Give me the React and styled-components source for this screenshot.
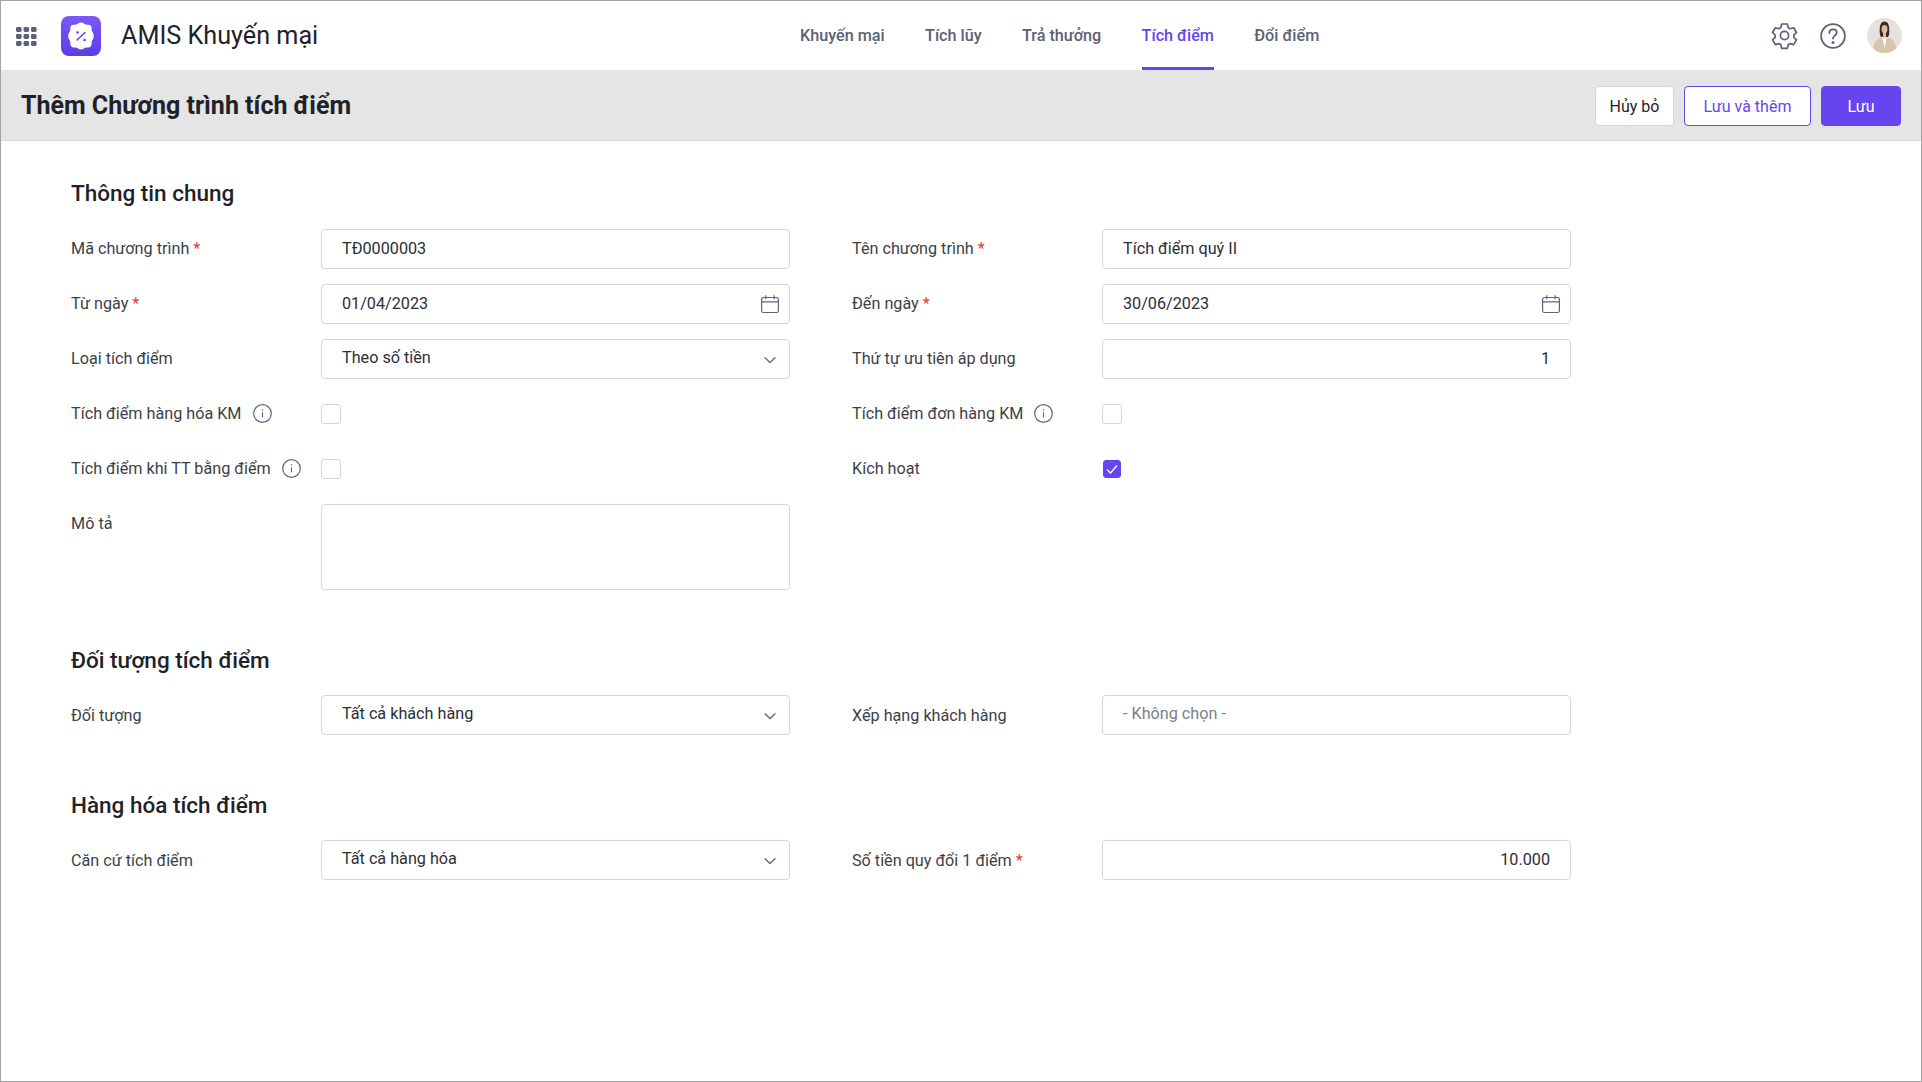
import React from "react";
import styled, { createGlobalStyle } from "styled-components";

const GlobalStyle = createGlobalStyle`
  html, body {
    margin: 0;
    padding: 0;
    background: #fff;
  }
  * {
    box-sizing: border-box;
  }
`;

const Page = styled.div`
  width: 1922px;
  height: 1082px;
  display: flex;
  flex-direction: column;
  border: 1px solid #a3a3a3;
  background: #fff;
  font-family: Roboto, "Liberation Sans", sans-serif;
  font-size: 16.2px;
  color: #1f2229;
  overflow: hidden;
`;

const Header = styled.header`
  height: 69px;
  flex: none;
  display: grid;
  grid-template-columns: 799px auto 1fr;
  align-items: stretch;
`;

const Brand = styled.div`
  display: flex;
  align-items: center;
  padding-left: 14px;
`;

const LogoWrap = styled.div`
  display: flex;
  margin-left: 24px;
`;

const AppName = styled.div`
  font-size: 25.2px;
  margin-left: 20px;
  color: #1f2229;
`;

const Nav = styled.nav`
  display: flex;
  gap: 40.3px;
`;

const NavItem = styled.div`
  display: flex;
  align-items: center;
  height: 69px;
  padding-top: 3px;
  font-size: 16.2px;
  font-weight: 500;
  color: ${(p) => (p.$active ? "#6645f0" : "#5b6275")};
  border-bottom: 3px solid ${(p) => (p.$active ? "#6645f0" : "transparent")};
`;

const HeaderRight = styled.div`
  display: flex;
  align-items: center;
  justify-content: flex-end;
  gap: 20px;
  padding-right: 19px;
`;

const Band = styled.div`
  height: 71px;
  flex: none;
  display: flex;
  align-items: center;
  justify-content: space-between;
  padding: 0 20px;
  background: #e5e5e5;
  border-bottom: 1px solid #d4d7dd;
`;

const Title = styled.h1`
  margin: 0;
  font-size: 25px;
  font-weight: 700;
  color: #1f2229;
`;

const Actions = styled.div`
  display: flex;
  gap: 10px;
  margin-top: 2px;
`;

const Button = styled.button`
  width: ${(p) => p.$w}px;
  height: 40px;
  padding: 0;
  font-family: inherit;
  font-size: 16px;
  border-radius: 4px;
  border: 1px solid ${(p) => (p.$variant === "default" ? "#d4d7dd" : "#6645f0")};
  background: ${(p) => (p.$variant === "primary" ? "#6645f0" : "#fff")};
  color: ${(p) =>
    p.$variant === "primary" ? "#fff" : p.$variant === "outline" ? "#6645f0" : "#1f2229"};
`;

const Content = styled.main`
  flex: 1;
  padding: 36px 0 0 70px;
`;

const Section = styled.section`
  margin-bottom: ${(p) => p.$mb || 0}px;
`;

const SectionTitle = styled.h2`
  margin: 0 0 ${(p) => p.$mb || 19}px;
  font-size: 22.5px;
  line-height: 32px;
  font-weight: 500;
  color: #1f2229;
`;

const FormGrid = styled.div`
  display: grid;
  grid-template-columns: 719px 719px;
  column-gap: 62px;
  row-gap: 15px;
`;

const Field = styled.div`
  display: grid;
  grid-template-columns: 250px 469px;
  align-items: ${(p) => (p.$top ? "start" : "center")};
  min-height: 40px;
`;

const Label = styled.label`
  display: flex;
  align-items: center;
  font-size: 16.2px;
  color: #3c3f47;
  line-height: 20px;
  padding-top: ${(p) => (p.$top ? 10 : p.$low ? 2 : 0)}px;
  padding-bottom: ${(p) => (p.$top || p.$low ? 0 : 1)}px;
`;

const Required = styled.span`
  color: #e5383b;
  margin-left: 4px;
`;

const InfoWrap = styled.span`
  display: inline-flex;
  margin-left: 11px;
  color: #5b6480;
`;

const Control = styled.div`
  height: ${(p) => p.$h || 40}px;
  display: flex;
  align-items: ${(p) => (p.$h ? "flex-start" : "center")};
  justify-content: space-between;
  padding: 0 12px ${(p) => (p.$select ? 3 : 1)}px 20px;
  border: 1px solid #d4d7dd;
  border-radius: 4px;
  background: #fff;
  font-size: 16.2px;
  color: #2b2e36;
`;

const RightValue = styled.div`
  width: 100%;
  text-align: right;
  padding-right: 8px;
`;

const Placeholder = styled.span`
  color: #7a7f8c;
`;

const CalendarWrap = styled.span`
  display: flex;
  margin-right: -3px;
  margin-top: 1px;
`;

const ChevronWrap = styled.span`
  display: flex;
  margin-top: 4px;
`;

const Check = styled.span`
  width: 20px;
  height: 20px;
  display: flex;
  align-items: center;
  justify-content: center;
  border-radius: 3px;
  border: 1px solid #d4d7dd;
  background: #fff;
`;

const CheckOn = styled(Check)`
  width: 18px;
  height: 18px;
  margin-left: 1px;
  border-color: #6645f0;
  background: #6645f0;
`;

const GridIcon = () => (
  <svg width="22" height="20" viewBox="0 0 22 20" fill="#5b6275">
    {[0, 1, 2].map((r) =>
      [0, 1, 2].map((c) => (
        <rect key={`${r}${c}`} x={1 + c * 7.5} y={1 + r * 7} width="5.6" height="5" rx="1.4" />
      ))
    )}
  </svg>
);

const Logo = () => (
  <svg width="40" height="40" viewBox="0 0 40 40">
    <defs>
      <linearGradient id="logoBg" x1="0" y1="0" x2="0" y2="1">
        <stop offset="0" stopColor="#7d58f8" />
        <stop offset="1" stopColor="#5b3ce6" />
      </linearGradient>
    </defs>
    <rect width="40" height="40" rx="8" fill="url(#logoBg)" />
    <path
      fill="#fff"
      d="M20 6.500c2 0 3.200 1.600 4.800 2 1.700.4 3.600-.2 4.900 1.100 1.300 1.300.7 3.200 1.100 4.900.4 1.600 2 2.800 2 5.500s-1.600 3.900-2 5.500c-.4 1.700.2 3.600-1.100 4.900-1.300 1.300-3.200.7-4.900 1.100-1.600.4-2.800 2-4.800 2s-3.200-1.600-4.800-2c-1.700-.4-3.600.2-4.900-1.100-1.300-1.300-.7-3.200-1.100-4.900-.4-1.600-2-2.800-2-5.500s1.600-3.900 2-5.500c.4-1.700-.2-3.600 1.100-4.900 1.300-1.300 3.200-.7 4.900-1.100 1.600-.4 2.800-2 4.800-2z"
    />
    <path d="M24 16.500 16 24" stroke="#6645f0" strokeWidth="1.600" strokeLinecap="round" />
    <circle cx="16.500" cy="16.500" r="1.300" fill="#6645f0" />
    <circle cx="23.500" cy="24" r="1.300" fill="#6645f0" />
  </svg>
);

const GearIcon = () => (
  <svg width="29" height="29" viewBox="0 0 24 24" fill="none" stroke="#5b6275" strokeWidth="1.400" strokeLinejoin="round">
    <path d="M9.700 2.500h4.600l.7 2.900 1.700 1 2.900-.8 2.300 3.900-2.200 2.100v1.900l2.200 2.100-2.300 3.900-2.900-.8-1.700 1-.7 2.900H9.700L9 19.700l-1.700-1-2.900.8-2.300-3.900 2.200-2.100v-1.900L2.100 9.500l2.300-3.900 2.900.8 1.700-1z" />
    <circle cx="12" cy="12" r="3.400" />
  </svg>
);

const HelpIcon = () => (
  <svg width="28" height="28" viewBox="0 0 26 26" fill="none" stroke="#5b6275" strokeWidth="1.700" strokeLinecap="round">
    <circle cx="13" cy="13" r="11" />
    <path d="M9.600 10.200c0-2 1.500-3.400 3.500-3.400s3.400 1.300 3.400 3c0 2.600-3.500 2.800-3.500 5.600" />
    <circle cx="13" cy="19" r=".6" />
  </svg>
);

const Avatar = () => (
  <svg width="35" height="35" viewBox="0 0 36 36">
    <defs>
      <clipPath id="avatarClip">
        <circle cx="18" cy="18" r="18" />
      </clipPath>
    </defs>
    <g clipPath="url(#avatarClip)">
      <rect width="36" height="36" fill="#e6e2df" />
      <path d="M6 36c.2-9 1.500-13.500 8-16h8c6.500 2.500 7.800 7 8 16z" fill="#d8c5b0" />
      <path d="M15.500 19.500h5L18 31z" fill="#fbf8f5" />
      <path d="M13.200 16c-.7-8 .8-12.500 4.800-12.500s5.500 4.500 4.800 12.500c-.1 2-.6 3-1.600 3.500h-6.400c-1-.5-1.500-1.500-1.600-3.500z" fill="#3f2a22" />
      <ellipse cx="18" cy="11.500" rx="3" ry="4.200" fill="#e5b99e" />
      <rect x="16.500" y="14" width="3" height="6.500" fill="#e5b99e" />
    </g>
  </svg>
);

const CalendarIcon = () => (
  <svg width="20" height="20" viewBox="0 0 20 20" fill="none" stroke="#5b6480" strokeWidth="1.200">
    <rect x="1.600" y="3.500" width="16.800" height="15" rx="1.800" />
    <path d="M1.600 7.800h16.800M5.800 1.200v4M14.200 1.200v4" />
  </svg>
);

const ChevronIcon = () => (
  <svg width="14" height="14" viewBox="0 0 14 14" fill="none" stroke="#5b6480" strokeWidth="1.300" strokeLinecap="round">
    <path d="M2 4.800 7 9.500l5-4.700" />
  </svg>
);

const InfoIcon = () => (
  <svg width="19" height="19" viewBox="0 0 19 19" fill="none" stroke="currentColor">
    <circle cx="9.500" cy="9.500" r="8.800" strokeWidth="1.200" />
    <path d="M9.500 8.300v5" strokeWidth="1.100" />
    <path d="M9.500 5.200v1.300" strokeWidth="1.200" />
  </svg>
);

const CheckMark = () => (
  <svg width="14" height="14" viewBox="0 0 14 14" fill="none" stroke="#fff" strokeWidth="1.300">
    <path d="M2 7.500 5.500 11 12 3.500" />
  </svg>
);

function Row({ label, required, info, children, top, low }) {
  return (
    <Field $top={top}>
      <Label $top={top} $low={low}>
        {label}
        {required && <Required>*</Required>}
        {info && (
          <InfoWrap>
            <InfoIcon />
          </InfoWrap>
        )}
      </Label>
      <div>{children}</div>
    </Field>
  );
}

function Select({ value }) {
  return (
    <Control $select>
      {value}
      <ChevronWrap>
        <ChevronIcon />
      </ChevronWrap>
    </Control>
  );
}

function DateInput({ value }) {
  return (
    <Control>
      {value}
      <CalendarWrap>
        <CalendarIcon />
      </CalendarWrap>
    </Control>
  );
}

const navItems = ["Khuyến mại", "Tích lũy", "Trả thưởng", "Tích điểm", "Đổi điểm"];

export default function App() {
  return (
    <Page>
      <GlobalStyle />
      <Header>
        <Brand>
          <GridIcon />
          <LogoWrap>
            <Logo />
          </LogoWrap>
          <AppName>AMIS Khuyến mại</AppName>
        </Brand>
        <Nav>
          {navItems.map((n) => (
            <NavItem key={n} $active={n === "Tích điểm"}>
              {n}
            </NavItem>
          ))}
        </Nav>
        <HeaderRight>
          <GearIcon />
          <HelpIcon />
          <Avatar />
        </HeaderRight>
      </Header>
      <Band>
        <Title>Thêm Chương trình tích điểm</Title>
        <Actions>
          <Button $variant="default" $w={79}>
            Hủy bỏ
          </Button>
          <Button $variant="outline" $w={127}>
            Lưu và thêm
          </Button>
          <Button $variant="primary" $w={80}>
            Lưu
          </Button>
        </Actions>
      </Band>
      <Content>
        <Section $mb={54}>
          <SectionTitle $mb={20}>Thông tin chung</SectionTitle>
          <FormGrid>
            <Row label="Mã chương trình" required>
              <Control>TĐ0000003</Control>
            </Row>
            <Row label="Tên chương trình" required>
              <Control>Tích điểm quý II</Control>
            </Row>
            <Row label="Từ ngày" required>
              <DateInput value="01/04/2023" />
            </Row>
            <Row label="Đến ngày" required>
              <DateInput value="30/06/2023" />
            </Row>
            <Row label="Loại tích điểm">
              <Select value="Theo số tiền" />
            </Row>
            <Row label="Thứ tự ưu tiên áp dụng">
              <Control>
                <RightValue>1</RightValue>
              </Control>
            </Row>
            <Row label="Tích điểm hàng hóa KM" info>
              <Check />
            </Row>
            <Row label="Tích điểm đơn hàng KM" info>
              <Check />
            </Row>
            <Row label="Tích điểm khi TT bằng điểm" info>
              <Check />
            </Row>
            <Row label="Kích hoạt">
              <CheckOn>
                <CheckMark />
              </CheckOn>
            </Row>
            <Row label="Mô tả" top>
              <Control $h={86} />
            </Row>
          </FormGrid>
        </Section>
        <Section $mb={54}>
          <SectionTitle>Đối tượng tích điểm</SectionTitle>
          <FormGrid>
            <Row label="Đối tượng" low>
              <Select value="Tất cả khách hàng" />
            </Row>
            <Row label="Xếp hạng khách hàng" low>
              <Control $select>
                <Placeholder>- Không chọn -</Placeholder>
              </Control>
            </Row>
          </FormGrid>
        </Section>
        <Section>
          <SectionTitle>Hàng hóa tích điểm</SectionTitle>
          <FormGrid>
            <Row label="Căn cứ tích điểm" low>
              <Select value="Tất cả hàng hóa" />
            </Row>
            <Row label="Số tiền quy đổi 1 điểm" required low>
              <Control>
                <RightValue>10.000</RightValue>
              </Control>
            </Row>
          </FormGrid>
        </Section>
      </Content>
    </Page>
  );
}
